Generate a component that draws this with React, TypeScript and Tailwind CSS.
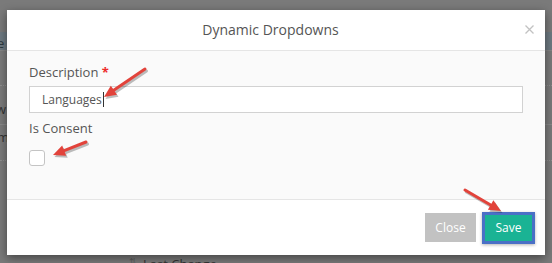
import React from "react";

type Pt = [number, number];

function Arrow({ tail, head }: { tail: Pt; head: Pt }) {
  const dx = head[0] - tail[0];
  const dy = head[1] - tail[1];
  const len = Math.hypot(dx, dy);
  const ux = dx / len;
  const uy = dy / len;
  const hl = 12;
  const hw = 5.5;
  const bx = head[0] - ux * hl;
  const by = head[1] - uy * hl;
  const nx = -uy;
  const ny = ux;
  const pts = `${head[0]},${head[1]} ${bx + nx * hw},${by + ny * hw} ${bx - nx * hw},${by - ny * hw}`;
  return (
    <g>
      <g transform="translate(1.5,2)" opacity="0.25">
        <line x1={tail[0]} y1={tail[1]} x2={bx + ux * 2} y2={by + uy * 2} stroke="#000" strokeWidth="3" strokeLinecap="round" />
        <polygon points={pts} fill="#000" />
      </g>
      <line x1={tail[0]} y1={tail[1]} x2={bx + ux * 2} y2={by + uy * 2} stroke="#e2433b" strokeWidth="3" strokeLinecap="round" />
      <polygon points={pts} fill="#e2433b" />
    </g>
  );
}

export default function App() {
  return (
    <div
      className="relative w-[552px] h-[263px] overflow-hidden bg-[#7a7a7a]"
      style={{ fontFamily: '"Open Sans", "Liberation Sans", sans-serif' }}
    >
      {/* page behind the backdrop */}
      <div className="absolute left-0 top-[32px] w-full h-[18px] bg-[#6d7981]" />
      <div className="absolute left-0 top-[50px] w-full h-px bg-[#858585]" />
      <div className="absolute left-[-3px] top-[36px] text-[13px] leading-[14px] text-[#2e3a40]">e</div>
      <div className="absolute left-0 top-[85px] w-full border-t border-dotted border-[#8e8e8e]" />
      <div className="absolute left-[-4px] top-[102px] text-[13px] leading-[14px] text-[#333]">w</div>
      <div className="absolute left-0 top-[124px] w-full h-px bg-[#888]" />
      <div className="absolute left-[-3px] top-[130px] text-[13px] leading-[14px] text-[#333]">m</div>
      <div className="absolute left-0 top-[160px] w-full border-t border-dotted border-[#8e8e8e]" />
      <div className="absolute left-[129px] top-[257px] text-[9px] leading-[10px] text-[#5e5e5e]">⇅</div>
      <div className="absolute left-[143px] top-[256px] text-[13px] leading-[16px] text-[#333]">Last Change</div>

      {/* modal */}
      <div className="relative ml-[7px] mt-[10px] w-[538px] h-[245px] bg-white shadow-[0_3px_9px_rgba(0,0,0,0.45)] flex flex-col">
        <div className="relative h-[41px] border-b border-[#e5e5e5] flex items-center justify-center pr-[11px]">
          <span className="text-[14px] text-[#555] leading-[20px]">Dynamic Dropdowns</span>
          <svg className="absolute right-[11px] top-[15px]" width="9" height="9" viewBox="0 0 9 9">
            <path d="M0.5 0.5 L8.5 8.5 M8.5 0.5 L0.5 8.5" stroke="#c2c2c2" strokeWidth="1.3" />
          </svg>
        </div>
        <div className="h-[149px] bg-[#fafafa] border-b border-[#e5e5e5] pl-[22px] pr-[22px] pt-[12px] flex flex-col">
          <label className="text-[13px] leading-[18px] text-[#555]">
            Description <span className="text-[#ed2b2b] font-bold">*</span>
          </label>
          <div className="mt-[5px] h-[27px] border border-[#d2d2d2] bg-white flex items-center pl-[12px] text-[12px] text-[#555]">
            <span>Languages</span>
            <span className="inline-block w-px h-[15px] bg-[#333] ml-[1px]" />
          </div>
          <label className="mt-[6px] text-[13px] leading-[18px] text-[#555]">Is Consent</label>
          <div className="mt-[13px] w-[16px] h-[16px] rounded-[3px] border border-[#c4c4c4] bg-white" />
        </div>
        <div className="flex-1 flex items-center justify-end pr-[10px] gap-[6px]">
          <button className="w-[51px] h-[29px] bg-[#c2c2c2] text-white text-[12px]">Close</button>
          <button className="w-[53px] h-[32px] border-[3px] border-[#4a70c6] bg-[#1ab394] text-white text-[12px] shadow-[0_1px_3px_rgba(0,0,0,0.3)]">
            Save
          </button>
        </div>
      </div>

      <svg className="absolute inset-0 pointer-events-none" width="552" height="263">
        <Arrow tail={[145, 69]} head={[104, 97]} />
        <Arrow tail={[86, 142]} head={[53, 155]} />
        <Arrow tail={[465, 190]} head={[501, 211]} />
      </svg>
    </div>
  );
}
